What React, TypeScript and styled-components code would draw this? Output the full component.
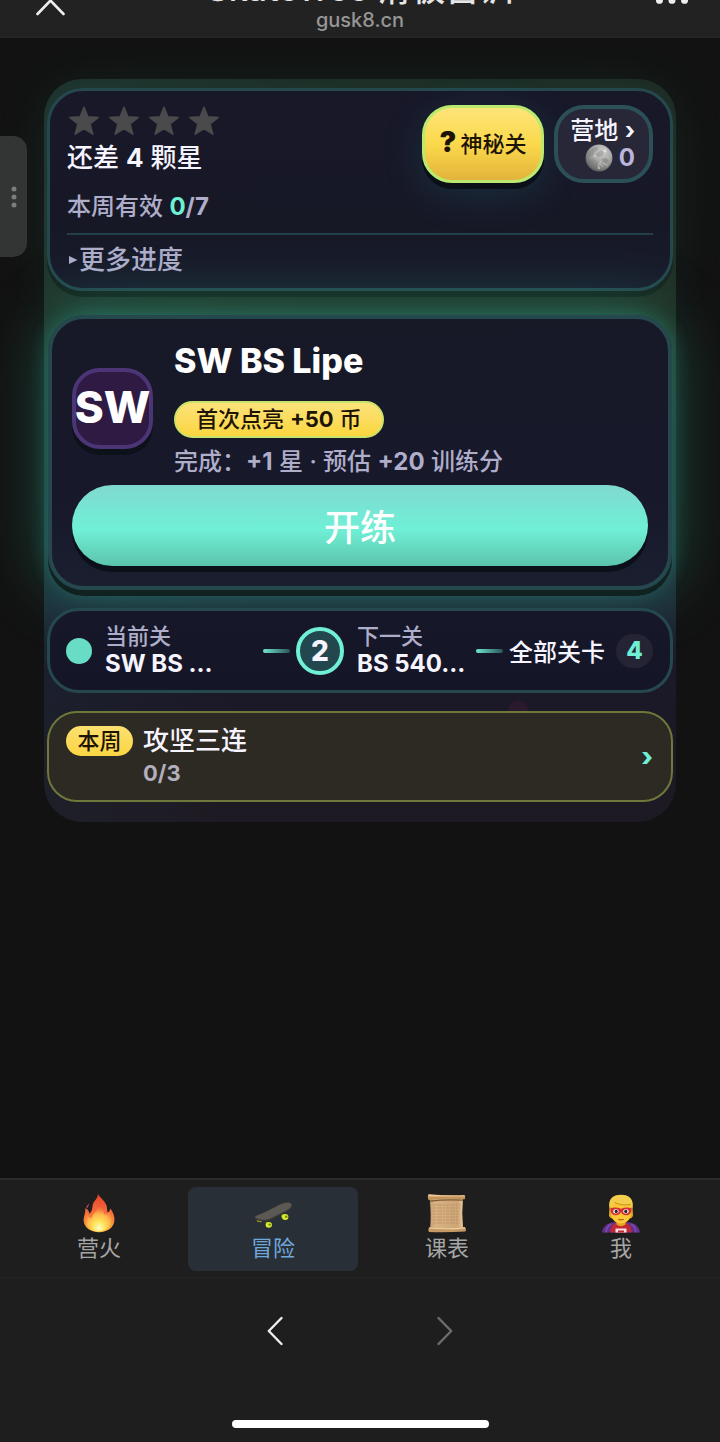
import React from 'react';
import styled, { createGlobalStyle, css } from 'styled-components';

const GlobalStyle = createGlobalStyle`
  * { box-sizing: border-box; }
  body {
    margin: 0;
    background: #121212;
    color: #f6f4ff;
    font-family: Inter, "Noto Sans CJK SC", sans-serif;
    font-weight: 500;
  }
  button {
    font: inherit;
    color: inherit;
    margin: 0;
    padding: 0;
    border: 0;
    background: none;
    cursor: pointer;
  }
  strong { font-weight: 700; }
  svg { display: block; }
`;

const mint = '#6ff0d4';
const muted = '#aeadca';
const teal = '#25484f';

const Page = styled.div`
  position: relative;
  display: flex;
  flex-direction: column;
  min-height: 100vh;
  overflow: hidden;
`;

/* Browser header */
const Header = styled.header`
  display: grid;
  grid-template-columns: 100px 1fr 100px;
  height: 38px;
  background: #222;
  border-bottom: 1px solid #262626;
  overflow: hidden;
`;

const HeaderCenter = styled.div`
  display: flex;
  flex-direction: column;
  justify-content: flex-end;
  align-items: center;
  height: 36px;
`;

const PageTitle = styled.div`
  font-size: 34px;
  line-height: 38px;
  color: #e6e6e6;
  white-space: nowrap;
`;

const PageUrl = styled.div`
  font-size: 20px;
  line-height: 24px;
  padding-bottom: 4px;
  color: #969696;
`;

const HeaderButton = styled.button<{ $end?: boolean }>`
  display: flex;
  justify-content: ${(p) => (p.$end ? 'flex-end' : 'flex-start')};
  align-items: flex-start;
  padding: 0 32px 0 36px;
`;

const SideHandle = styled.button`
  position: absolute;
  left: 0;
  top: 136px;
  display: flex;
  align-items: center;
  justify-content: center;
  width: 27px;
  height: 121px;
  border-radius: 0 14px 14px 0;
  background: #333534;
`;

/* Game panel */
const Main = styled.main`
  flex: 1;
  padding: 41px 44px;
`;

const Panel = styled.div`
  display: flex;
  flex-direction: column;
  gap: 18px;
  padding: 9px 3px 20px;
  border-radius: 38px;
  background:
    radial-gradient(circle 11px at 75% 85%, rgba(150, 30, 90, 0.12) 80%, transparent),
    linear-gradient(100deg, rgba(30, 90, 90, 0.16), transparent 40%),
    linear-gradient(to bottom, #1d2822 0%, #202d22 32%, #1c2328 55%, #1d2c38 70%, #1b1828 80%, #1e1a23 100%);
`;

const StatusCard = styled.section`
  margin-bottom: 6px;
  padding: 14px 17px 10px;
  border: 3px solid ${teal};
  border-radius: 36px;
  background: linear-gradient(to bottom, #181829, #171826 70%, #191d2d);
  box-shadow: 0 6px 0 #15251f, 0 0 56px rgba(60, 220, 180, 0.1);
`;

const StatusTop = styled.div`
  display: flex;
  justify-content: space-between;
  align-items: flex-start;
`;

const Stars = styled.div`
  display: flex;
  gap: 8px;
  height: 32px;
  padding-left: 1px;
  align-items: center;
`;

const StarsLeft = styled.p`
  margin: 0;
  font-size: 26px;
  line-height: 42px;
`;

const WeekCount = styled.p`
  margin: 13px 0 11px;
  font-size: 24px;
  line-height: 30px;
  color: ${muted};
`;

const Valid = styled.strong`
  color: ${mint};
`;

const Actions = styled.div`
  display: flex;
  gap: 10px;
`;

const chip = css`
  height: 78px;
  border-radius: 30px;
`;

const MysteryButton = styled.button`
  ${chip}
  display: flex;
  align-items: center;
  justify-content: center;
  gap: 4px;
  width: 122px;
  padding-bottom: 4px;
  border: 3px solid #b9ea6f;
  background: linear-gradient(to bottom, #fde47a, #fbd94b 50%, #e3b33c);
  color: #1d1406;
  font-size: 22px;
  box-shadow: 0 6px 0 #0b1018, 0 10px 40px rgba(40, 160, 170, 0.18);
`;

const QuestionMark = styled.span`
  font-size: 28px;
  font-weight: 900;
`;

const CampButton = styled.button`
  ${chip}
  display: flex;
  flex-direction: column;
  align-items: flex-end;
  justify-content: center;
  width: 99px;
  padding: 2px 14px 0 0;
  border: 4px solid #2c5057;
  background: #272738;
  font-size: 24px;
  line-height: 26px;
`;

const Coins = styled.span`
  display: flex;
  align-items: center;
  gap: 6px;
  color: #bab5da;
`;

const MoreButton = styled.button`
  display: flex;
  align-items: center;
  width: 100%;
  padding-top: 7px;
  border-top: 2px solid #23404a;
  color: ${muted};
  font-size: 26px;
  line-height: 36px;
  svg { margin: 0 1px 0 2px; }
`;

const LevelCard = styled.section`
  display: flex;
  flex-direction: column;
  gap: 7px;
  margin: 0 1px;
  padding: 20px;
  border: 4px solid ${teal};
  border-radius: 36px;
  background: linear-gradient(to bottom, #181927, #17182a 65%, #1a1f30);
  box-shadow:
    0 6px 0 #10221f,
    0 0 20px rgba(50, 190, 170, 0.32),
    0 0 64px rgba(60, 210, 170, 0.34);
`;

const LevelInfo = styled.div`
  display: flex;
  align-items: center;
  gap: 21px;
`;

const LevelBadge = styled.div`
  display: flex;
  align-items: center;
  justify-content: center;
  flex: none;
  width: 81px;
  height: 81px;
  padding-bottom: 3px;
  border: 4px solid #4b3577;
  border-radius: 28px;
  background: #2e1a42;
  color: #fff;
  font-size: 44px;
  font-weight: 800;
  box-shadow: 0 6px 0 #0d1119;
`;

const LevelText = styled.div`
  display: flex;
  flex-direction: column;
  align-items: flex-start;
`;

const LevelTitle = styled.h1`
  margin: 0;
  font-size: 34px;
  line-height: 44px;
  font-weight: 800;
  color: #fff;
`;

const RewardPill = styled.span`
  margin: 18px 0 8px;
  padding: 0 20px;
  border: 2px solid #c9e36a;
  border-radius: 19px;
  background: linear-gradient(to bottom, #fce27a, #fbd640);
  color: #1d1406;
  font-size: 22px;
  line-height: 33px;
`;

const LevelNote = styled.p`
  margin: 0;
  font-size: 24px;
  line-height: 32px;
  color: ${muted};
`;

const StartButton = styled.button`
  height: 81px;
  padding-bottom: 2px;
  border-radius: 41px;
  background: linear-gradient(to bottom, #80d9d0, #6ff0d6 55%, #5cc3ac);
  color: #fff;
  font-size: 36px;
  box-shadow: 0 6px 0 #0a0f18;
`;

const PathCard = styled.section`
  display: flex;
  align-items: center;
  height: 85px;
  padding: 0 17px 0 16px;
  border: 3px solid ${teal};
  border-radius: 32px;
  background: linear-gradient(to bottom, #16182a, #141526);
`;

const CurrentDot = styled.span`
  flex: none;
  width: 26px;
  height: 26px;
  border-radius: 50%;
  background: #68dcc4;
`;

const Step = styled.div<{ $grow?: boolean }>`
  flex: ${(p) => (p.$grow ? '1' : 'none')};
  min-width: 124px;
  padding-left: 13px;
  padding-bottom: 2px;
`;

const StepLabel = styled.div`
  font-size: 22px;
  line-height: 28px;
  color: ${muted};
`;

const StepName = styled.div`
  font-size: 24px;
  line-height: 28px;
  font-weight: 700;
`;

const Connector = styled.span`
  flex: none;
  width: 27px;
  height: 4px;
  margin: 0 6px 0 8px;
  border-radius: 2px;
  background: linear-gradient(to right, #6fe6cf, #2a5358);
`;

const NextCircle = styled.span`
  display: flex;
  align-items: center;
  justify-content: center;
  flex: none;
  width: 48px;
  height: 48px;
  border: 4px solid ${mint};
  border-radius: 50%;
  background: #23474f;
  font-size: 28px;
  font-weight: 800;
`;

const AllLevels = styled.button`
  display: flex;
  align-items: center;
  gap: 11px;
  font-size: 24px;
`;

const Count = styled.span`
  width: 37px;
  border-radius: 17px;
  background: #242435;
  color: ${mint};
  line-height: 34px;
  font-weight: 800;
  text-align: center;
`;

const ChallengeCard = styled.button`
  display: flex;
  align-items: flex-start;
  gap: 10px;
  padding: 13px 18px 12px 17px;
  border: 2px solid #6e783a;
  border-radius: 30px;
  background: #2d2923;
  text-align: left;
`;

const WeekTag = styled.span`
  width: 67px;
  border-radius: 15px;
  background: linear-gradient(to bottom, #fce070, #fbd544);
  color: #1d1406;
  font-size: 22px;
  line-height: 30px;
  text-align: center;
`;

const ChallengeText = styled.span`
  display: flex;
  flex: 1;
  flex-direction: column;
  gap: 2px;
  font-size: 26px;
  line-height: 30px;
`;

const ChallengeCount = styled.strong`
  font-size: 22px;
  color: #b3afbd;
`;

const Arrow = styled.span`
  align-self: center;
  color: ${mint};
  font-size: 26px;
  line-height: 30px;
  font-weight: 800;
`;

/* Bottom navigation */
const Tabs = styled.nav`
  display: grid;
  grid-template-columns: repeat(4, 1fr);
  gap: 4px;
  padding: 7px 14px 6px;
  border-top: 2px solid #2b2b2b;
  background: #1e1e1e;
`;

const Tab = styled.button<{ $active?: boolean }>`
  display: flex;
  flex-direction: column;
  align-items: center;
  height: 84px;
  padding-top: 6px;
  border-radius: 8px;
  background: ${(p) => (p.$active ? '#292f37' : 'transparent')};
  color: ${(p) => (p.$active ? '#6fa8dc' : '#a6a6a6')};
  font-size: 22px;
  line-height: 30px;
  font-weight: 400;
`;

const BrowserBar = styled.footer`
  display: flex;
  flex-direction: column;
  justify-content: space-between;
  align-items: center;
  height: 165px;
  padding: 33px 0 14px;
  border-top: 1px solid #232323;
  background: #1e1e1e;
`;

const HistoryButtons = styled.div`
  display: flex;
  gap: 130px;
`;

const HistoryButton = styled.button`
  display: flex;
  align-items: center;
  justify-content: center;
  width: 40px;
  height: 40px;
  color: #eee;
  &:disabled { color: #6d6d6d; }
`;

const HomeIndicator = styled.div`
  width: 257px;
  height: 8px;
  border-radius: 4px;
  background: #fff;
`;

const Star = () => (
  <svg width="32" height="32" viewBox="0 0 32 32" aria-hidden="true">
    <path
      d="M16 2.2 19.8 11.9 30.2 12.5 22.1 19 24.8 29.2 16 23.5 7.2 29.2 9.9 19 1.8 12.5 12.2 11.9Z"
      fill="#4a4a4c" stroke="#4a4a4c" strokeWidth="1.6" strokeLinejoin="round"
    />
  </svg>
);

const Moon = () => (
  <svg width="28" height="28" viewBox="0 0 28 28" aria-hidden="true">
    <defs>
      <radialGradient id="moon" cx="62%" cy="28%" r="75%">
        <stop offset="0" stopColor="#d0d0ce" />
        <stop offset="0.55" stopColor="#a2a2a1" />
        <stop offset="1" stopColor="#606061" />
      </radialGradient>
    </defs>
    <circle cx="14" cy="14" r="13.4" fill="url(#moon)" />
    <path d="M3 9q3-5 8-6 3 1 2 3l-4 2-1 3-4 2Z" fill="#777" opacity=".35" />
    <path d="M13 8l4-2 2 3-2 3-4 1-2-2Z" fill="#808080" opacity=".4" />
    <path d="M4 16l5-1 4 3-1 4-4 2-4-4Z" fill="#777" opacity=".3" />
    <path d="M17 15l4-1 3 3-3 2-3-1Z" fill="#747474" opacity=".45" />
    <path d="M15 20l3 3M18 19l5 3M16 17l-3 6" stroke="#dededc" strokeWidth="1" opacity=".5" />
    <circle cx="20" cy="7" r="1.5" fill="#eee" opacity=".7" />
    <circle cx="10" cy="12" r="1.2" fill="#ddd" opacity=".6" />
    <circle cx="14" cy="24" r="1.3" fill="#eee" opacity=".5" />
  </svg>
);

const Fire = () => (
  <svg width="40" height="40" viewBox="0 0 40 40" aria-hidden="true">
    <defs>
      <linearGradient id="flame" x1="0" y1="0" x2="0" y2="1">
        <stop offset="0" stopColor="#e6402a" />
        <stop offset="0.45" stopColor="#f5693a" />
        <stop offset="0.75" stopColor="#f98c3a" />
        <stop offset="1" stopColor="#ffb83c" />
      </linearGradient>
      <radialGradient id="flameCore" cx="50%" cy="88%" r="72%">
        <stop offset="0" stopColor="#fffbd0" />
        <stop offset="0.3" stopColor="#ffe55c" />
        <stop offset="0.65" stopColor="#ffb84a" />
        <stop offset="1" stopColor="#f98a4a" stopOpacity="0" />
      </radialGradient>
    </defs>
    <path
      d="M19 0.8C20 4 26 7.5 27.5 12.5 28.4 15.2 28 18 28.5 19.5 30.5 18.6 31 16.8 31.4 15.5 34 19 35.8 23.2 35.4 27.5 34.9 34.3 28.6 39.2 20 39.2 11.4 39.2 5 34.6 4.6 27.6 4.4 23.5 6.8 20.2 6.2 15.2 8.6 15.8 10 18 10.6 20.8 12.8 18.8 13.2 16 13.6 12.8 14.2 8 18.8 6.2 19 .8Z"
      fill="url(#flame)"
    />
    <path
      d="M20.5 9C22 14 24.4 17 25.4 21.4 27.8 21.4 29.4 20 30.8 19 33 24 33.8 30.3 29.4 34.8 24.8 39.4 15.4 39.6 10.4 35.2 6.6 31.6 6.6 26.8 8.2 21.6 9.4 23.8 11 25.2 12.8 25.2 13.6 19.2 20.4 17 20.5 9Z"
      fill="url(#flameCore)"
    />
    <path d="M9.6 10c-.2 2-2.4 2.8-2 5.4 1.4-.9 2.4-3.2 2-5.4Z" fill="#e5486a" />
  </svg>
);

const Skateboard = () => (
  <svg width="40" height="40" viewBox="0 -3 40 40" aria-hidden="true">
    <path d="M4 22.8l5 1.8-1 2-4-1.6ZM12 26l5 2-2 2ZM29 18l5 2-2 3-4-2Z" fill="#9aa520" />
    <circle cx="5.6" cy="24.4" r="1.8" fill="#8c8d23" />
    <ellipse cx="15.8" cy="28.8" rx="3.2" ry="2.9" fill="#d9ec2d" />
    <ellipse cx="16.8" cy="28.6" rx="1.4" ry="1.2" fill="#7f8b1c" />
    <ellipse cx="32.2" cy="21" rx="3.2" ry="2.9" fill="#d9ec2d" />
    <ellipse cx="33.2" cy="20.8" rx="1.4" ry="1.2" fill="#7f8b1c" />
    <path
      d="M1.2 21.2C1.6 19.6 6.5 18.4 10.5 16.4L26 8.6C30 6.2 37.4 4.8 39 7.8 40.2 10.4 38 13.6 34.2 15.6L17.2 24.2C13.2 26.2 8 25.4 4.4 24.2 2.2 23.4 1 22.4 1.2 21.2Z"
      fill="#3a3836"
    />
    <path
      d="M2.2 20.6C4 19.2 8 18.4 11 16.8L26.4 9C30 7 36.6 5.6 38.2 8 39 10 36.6 12.6 33.4 14.4L16.6 22.8C12.8 24.6 8 24 4.8 22.8 3 22 1.8 21.4 2.2 20.6Z"
      fill="#5c5955"
    />
  </svg>
);

const Scroll = () => (
  <svg width="40" height="40" viewBox="0 0 40 40" aria-hidden="true">
    <defs>
      <linearGradient id="paper" x1="0" y1="0" x2="1" y2="0">
        <stop offset="0" stopColor="#c49c6c" />
        <stop offset="0.15" stopColor="#d8b282" />
        <stop offset="0.85" stopColor="#cda676" />
        <stop offset="1" stopColor="#ecca9c" />
      </linearGradient>
    </defs>
    <path d="M2.600 5h33.400q-1.500 15 0 30H3.200q1.200-14-.6-30Z" fill="url(#paper)" />
    <path d="M1.500 1.200q17 1.400 35.900.8 1.600 1.800.4 4.200Q20 5 1.400 7 0 4 1.500 1.200Z" fill="#c2935c" />
    <path d="M1.500 1.400q17 1.500 36.100.9l.2 1.200Q20 3.400 1.300 3.400Z" fill="#ebca98" />
    <path d="M3 8.200q16-2.200 33-1" stroke="#805a34" strokeWidth="1.200" fill="none" />
    <path
      d="M6 12h27M6 15h27M6 18h26M6 21h26M6 24h26M6 27h25M6 30h26"
      stroke="#9b7145" strokeWidth=".9" strokeDasharray="3 1 5 1 2 1" opacity=".4"
    />
    <path d="M2 34.400q16 1.600 35.600-.4 2.400 1.800.8 4.400-18 1.200-36.400.6-1.400-2.400 0-4.600Z" fill="#c59a65" />
    <path d="M2 35q17 1.600 36-.2" stroke="#f0d1a1" strokeWidth="1.200" fill="none" />
  </svg>
);

const Hero = () => (
  <svg width="40" height="40" viewBox="0 0 40 40" aria-hidden="true">
    <path d="M1 39.5C2 32.5 7.5 29.6 14 29h12c6.500.6 12 3.500 13 10.500Z" fill="#60328c" />
    <path d="M5 39.500q.6-6 5-8.500M35 39.500q-.6-6-5-8.500" stroke="#8049ad" strokeWidth="1.600" fill="none" />
    <path d="M9.500 39.500q0-7 5-9.500h11q5 2.500 5 9.500Z" fill="#c52835" />
    <path d="M15.500 27h9v4.500q-4.500 3.500-9 0Z" fill="#e5a51f" />
    <path d="M14.500 39.500v-4h11v4Z" fill="#f7dfe1" />
    <path d="M17 39.500v-2h6v2Z" fill="#c52835" />
    <path d="M8.500 13C8 6 12.500 2 20 2s12 4 11.500 11l.5 10q-1.600 3-4 2.500h-16q-2.400.5-4-2.500Z" fill="#dfa724" />
    <path d="M10 14q0-8 10-8t10 8v6c0 6.500-5 10.500-10 10.500S10 26.500 10 20Z" fill="#fdc736" />
    <path d="M8.500 15C7 6 12 1.800 20 1.800S33 6 31.500 15q-1.600-1-2.200-3.500Q20 13.500 14 9.500 11.500 13.500 8.500 15Z" fill="#f3cd4c" />
    <path d="M13.600 9.400Q20 13 29.600 11.500" stroke="#c98d1d" strokeWidth="1" fill="none" />
    <path d="M9.500 15.200q5-1.700 10.500.5 5.500-2.200 10.500-.5 .4 6.300-4.500 7-4 .4-6-3.200-2 3.600-6 3.200Q9.100 21.500 9.500 15.200Z" fill="#d22f37" />
    <ellipse cx="15" cy="18.400" rx="2.700" ry="2.100" fill="#fff" />
    <ellipse cx="25" cy="18.400" rx="2.700" ry="2.100" fill="#fff" />
    <circle cx="15.200" cy="18.400" r="1.600" fill="#2b2020" />
    <circle cx="24.800" cy="18.400" r="1.600" fill="#2b2020" />
    <path d="M17.400 26.200q2.600 1.200 5.200 0" stroke="#9b5b12" strokeWidth="1.100" fill="none" />
  </svg>
);

const tabs = [
  { label: '营火', icon: <Fire /> },
  { label: '冒险', icon: <Skateboard />, active: true },
  { label: '课表', icon: <Scroll /> },
  { label: '我', icon: <Hero /> },
];

export default function App() {
  return (
    <Page>
      <GlobalStyle />
      <Header>
        <HeaderButton aria-label="关闭">
          <svg width="30" height="16" viewBox="0 0 30 16">
            <path d="M1.500 14 14.500 .5 27.500 14" stroke="#eee" strokeWidth="2.600" strokeLinecap="round" fill="none" />
          </svg>
        </HeaderButton>
        <HeaderCenter>
          <PageTitle>SkateTree 滑板营训</PageTitle>
          <PageUrl>gusk8.cn</PageUrl>
        </HeaderCenter>
        <HeaderButton $end aria-label="更多">
          <svg width="37" height="6" viewBox="0 0 37 6" fill="#eee">
            <circle cx="4" cy="0" r="4" />
            <circle cx="18.500" cy="0" r="4" />
            <circle cx="33" cy="0" r="4" />
          </svg>
        </HeaderButton>
      </Header>

      <Main>
        <Panel>
          <StatusCard>
            <StatusTop>
              <div>
                <Stars>
                  <Star /><Star /><Star /><Star />
                </Stars>
                <StarsLeft>还差 <strong>4</strong> 颗星</StarsLeft>
                <WeekCount>本周有效 <Valid>0</Valid><strong>/7</strong></WeekCount>
              </div>
              <Actions>
                <MysteryButton>
                  <QuestionMark>?</QuestionMark>神秘关
                </MysteryButton>
                <CampButton>
                  <span>营地 <strong>›</strong></span>
                  <Coins><Moon /><strong>0</strong></Coins>
                </CampButton>
              </Actions>
            </StatusTop>
            <MoreButton>
              <svg width="9" height="10" viewBox="0 0 9 10" aria-hidden="true">
                <path d="M0 1v8l8.500-4Z" fill="#aeadca" />
              </svg>
              更多进度
            </MoreButton>
          </StatusCard>

          <LevelCard>
            <LevelInfo>
              <LevelBadge>SW</LevelBadge>
              <LevelText>
                <LevelTitle>SW BS Lipe</LevelTitle>
                <RewardPill>首次点亮 <strong>+50</strong> 币</RewardPill>
                <LevelNote>完成：<strong>+1</strong> 星 · 预估 <strong>+20</strong> 训练分</LevelNote>
              </LevelText>
            </LevelInfo>
            <StartButton>开练</StartButton>
          </LevelCard>

          <PathCard>
            <CurrentDot />
            <Step $grow>
              <StepLabel>当前关</StepLabel>
              <StepName>SW BS …</StepName>
            </Step>
            <Connector />
            <NextCircle>2</NextCircle>
            <Step>
              <StepLabel>下一关</StepLabel>
              <StepName>BS 540…</StepName>
            </Step>
            <Connector />
            <AllLevels>全部关卡<Count>4</Count></AllLevels>
          </PathCard>

          <ChallengeCard>
            <WeekTag>本周</WeekTag>
            <ChallengeText>
              攻坚三连
              <ChallengeCount>0/3</ChallengeCount>
            </ChallengeText>
            <Arrow>›</Arrow>
          </ChallengeCard>
        </Panel>
      </Main>

      <Tabs>
        {tabs.map((t) => (
          <Tab key={t.label} $active={t.active}>
            {t.icon}
            {t.label}
          </Tab>
        ))}
      </Tabs>

      <BrowserBar>
        <HistoryButtons>
          <HistoryButton aria-label="后退">
            <svg width="16" height="30" viewBox="0 0 16 30">
              <path d="M14.500 2 1.800 15l12.700 13" stroke="currentColor" strokeWidth="2.400" strokeLinecap="round" strokeLinejoin="round" fill="none" />
            </svg>
          </HistoryButton>
          <HistoryButton aria-label="前进" disabled>
            <svg width="16" height="30" viewBox="0 0 16 30">
              <path d="M1.500 2 14.200 15 1.500 28" stroke="currentColor" strokeWidth="2.400" strokeLinecap="round" strokeLinejoin="round" fill="none" />
            </svg>
          </HistoryButton>
        </HistoryButtons>
        <HomeIndicator />
      </BrowserBar>

      <SideHandle aria-label="打开侧栏">
        <svg width="6" height="22" viewBox="0 0 6 22" fill="#7b7d7c">
          <circle cx="3" cy="3" r="2.500" />
          <circle cx="3" cy="11" r="2.500" />
          <circle cx="3" cy="19" r="2.500" />
        </svg>
      </SideHandle>
    </Page>
  );
}
